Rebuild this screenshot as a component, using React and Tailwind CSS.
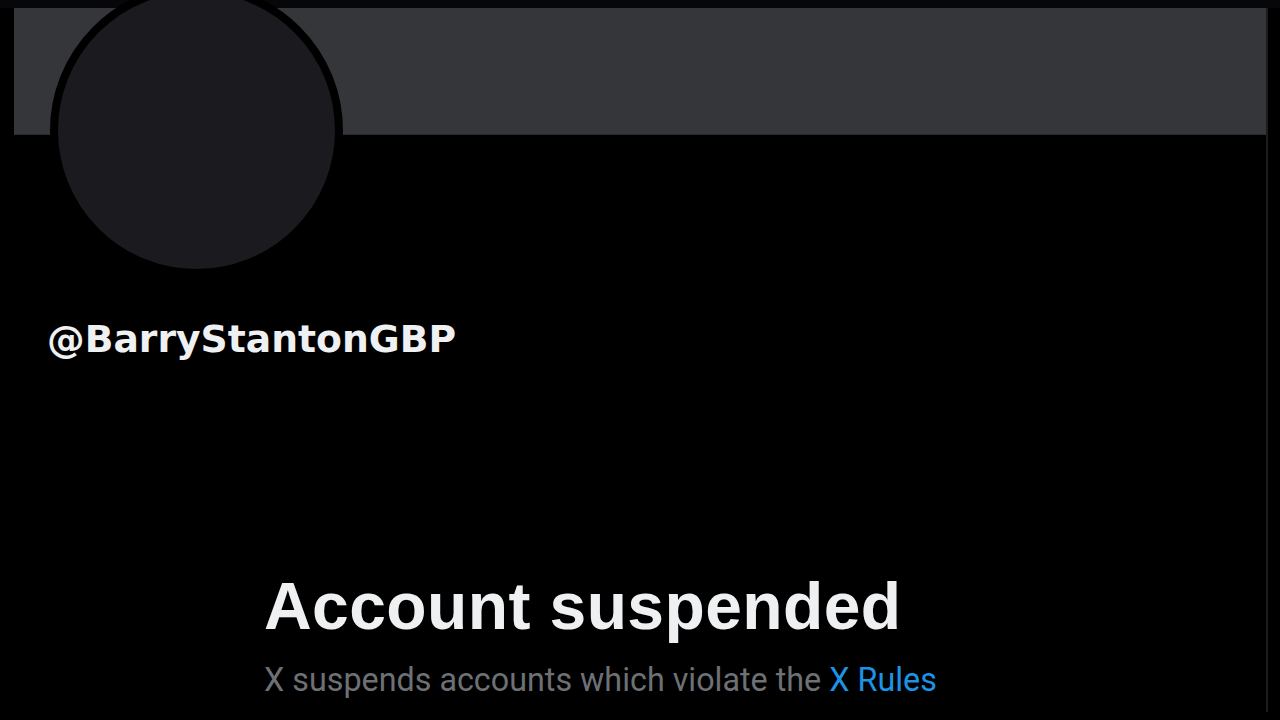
export default function App() {
  return (
    <div className="relative w-[1280px] h-[720px] overflow-hidden bg-black">
      <div className="h-[8px] bg-[#07070a]" />
      <div className="relative ml-[14px] w-[1254px] h-[704px] border-r-2 border-[#1d1d1f]">
        <div className="h-[127px] bg-[#35363a] border-b border-[#2a2b2e]" />
        <div className="absolute left-[36px] top-[-24px] w-[293px] h-[293px] rounded-full bg-[#1b1b1f] border-[8px] border-black" />
        <div className="pt-[182px] pl-[33px]">
          <div
            className="text-[37.7px] font-bold text-[#eef0f1] leading-[44px]"
            style={{ fontFamily: '"DejaVu Sans", Verdana, sans-serif' }}
          >
            @BarryStantonGBP
          </div>
        </div>
        <div className="pl-[250px] pt-[209px]">
          <div
            className="text-[66px] font-bold text-[#eef0f1] leading-[72px] tracking-[0.4px]"
            style={{ fontFamily: '"Liberation Sans", Arial, sans-serif' }}
          >
            Account suspended
          </div>
          <div
            className="mt-[18px] text-[32.3px] text-[#6d7175] leading-[40px]"
            style={{ fontFamily: 'Roboto, "Liberation Sans", sans-serif' }}
          >
            X suspends accounts which violate the <span className="text-[#1d93e6]">X Rules</span>
          </div>
        </div>
      </div>
    </div>
  );
}
